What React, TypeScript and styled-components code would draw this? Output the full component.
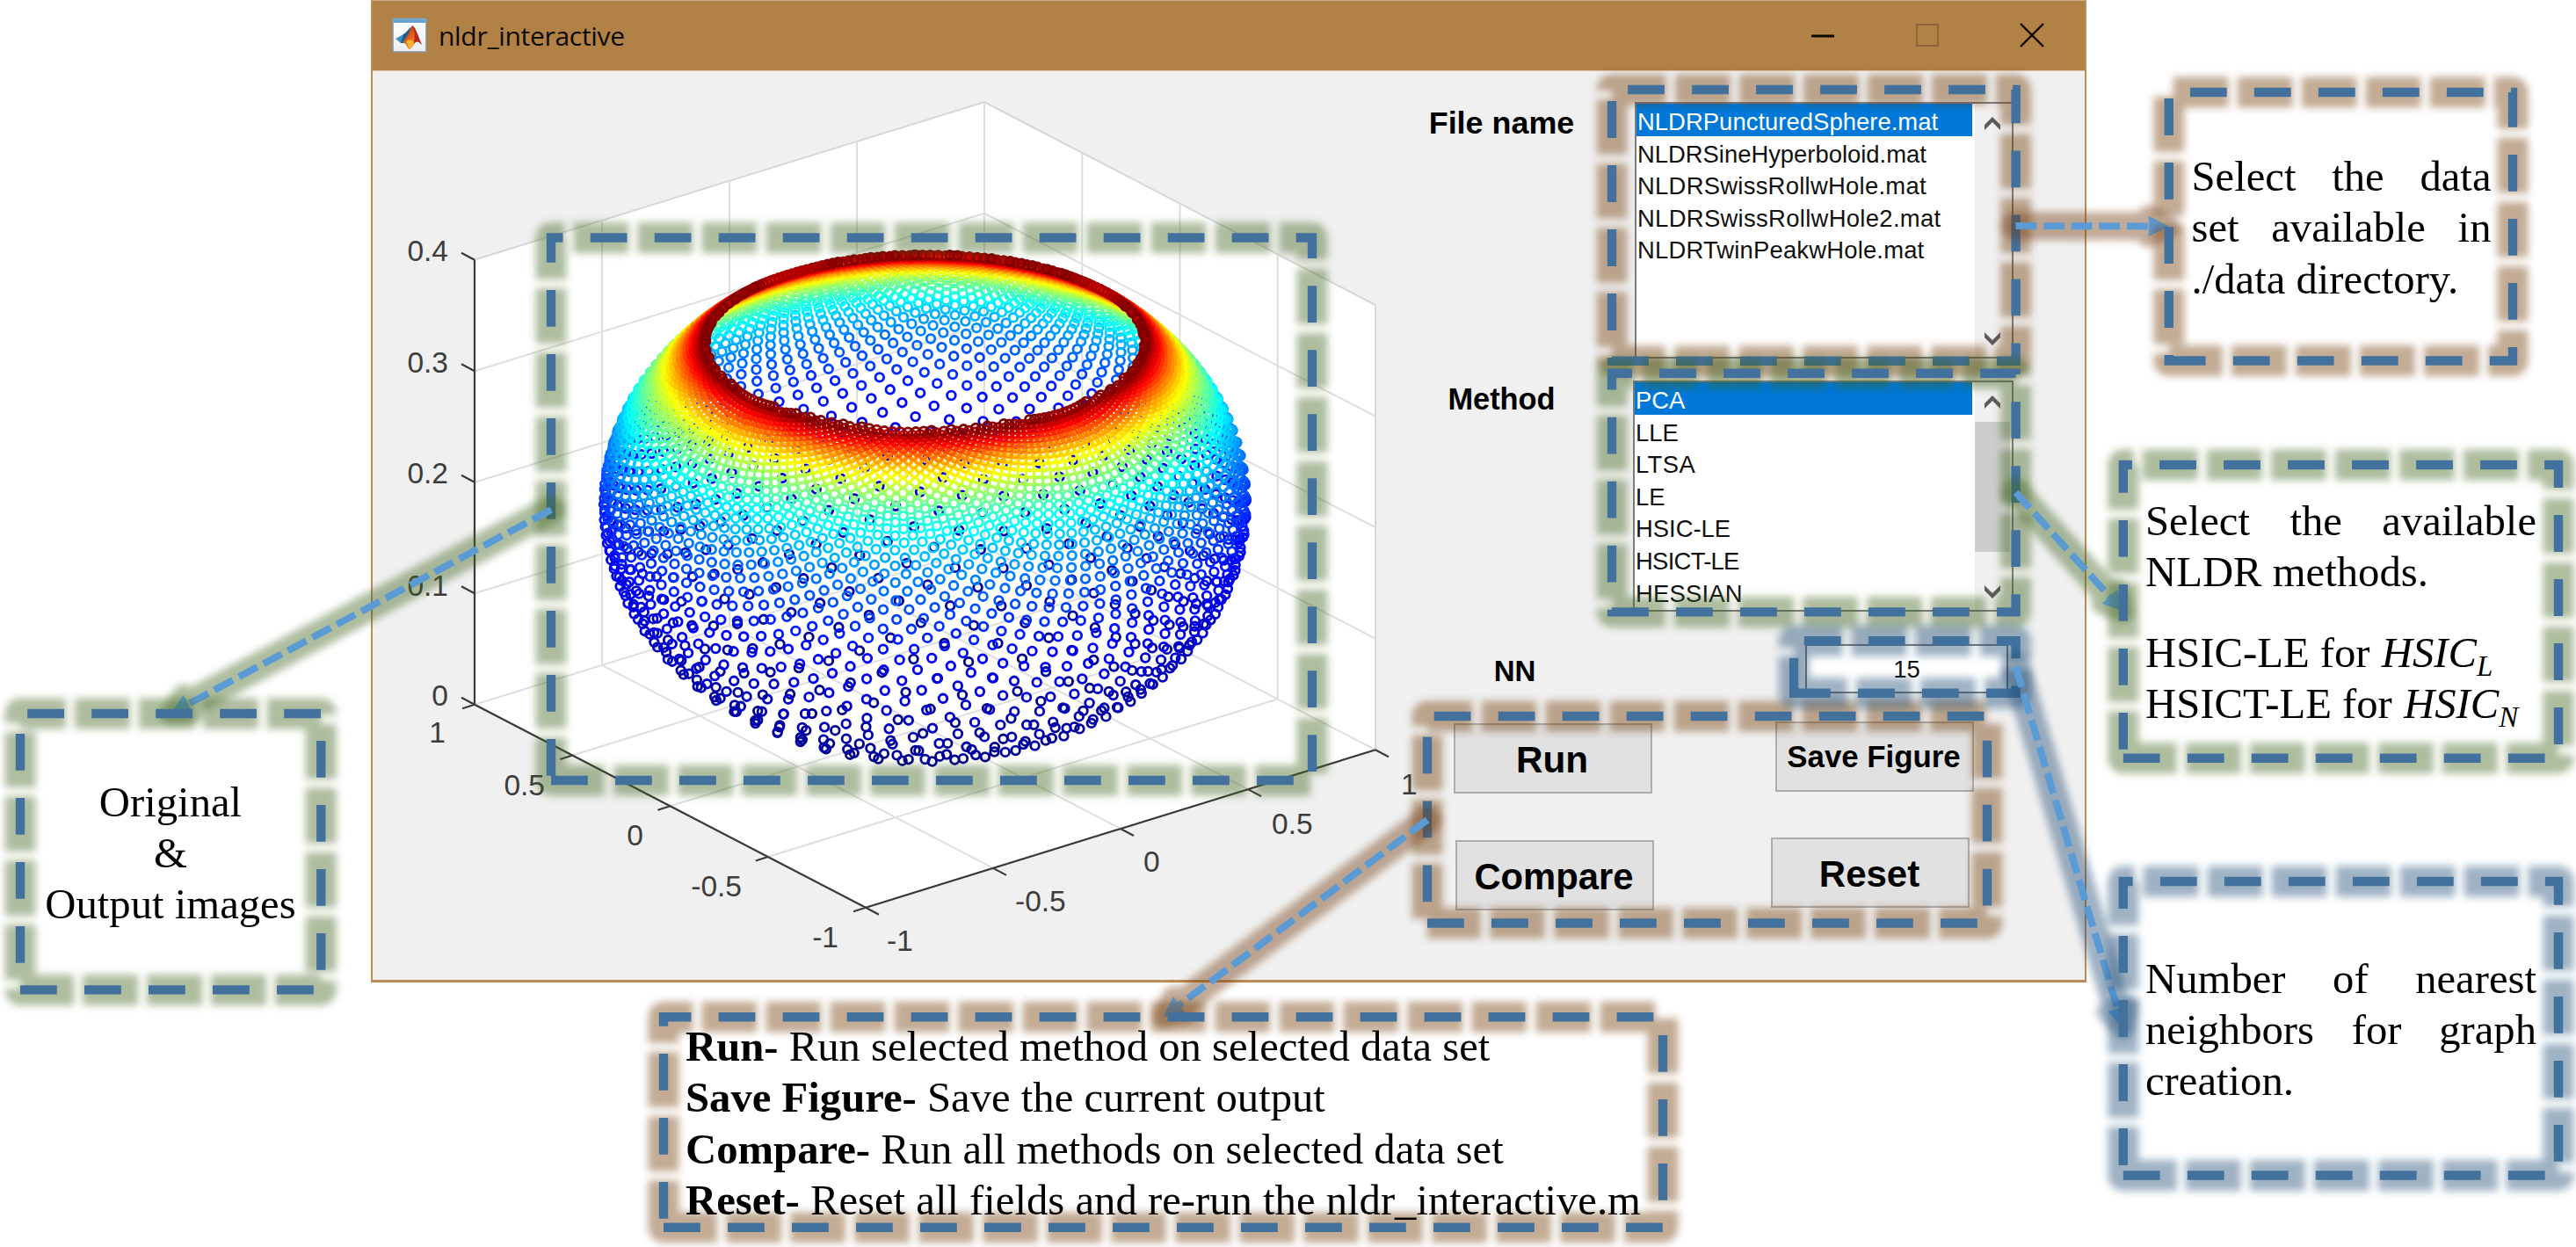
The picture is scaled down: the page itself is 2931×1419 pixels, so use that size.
import React from "react";
import styled, { createGlobalStyle } from "styled-components";

const GlobalStyle = createGlobalStyle`
  html, body { margin: 0; padding: 0; background: #ffffff; }
  *, *::before, *::after { box-sizing: border-box; }
`;

const SANS = `"Liberation Sans", Arial, sans-serif`;
const SERIF = `"Liberation Serif", "Times New Roman", serif`;

const Page = styled.main`
  position: relative;
  width: 2931px;
  height: 1419px;
  overflow: hidden;
  background: #ffffff;
`;

/* ---------- application window ---------- */

const Window = styled.section`
  display: flex;
  flex-direction: column;
  width: 1952px;
  height: 1118px;
  margin-left: 422px;
  border: 2px solid #bd8d55;
  border-top: 1px solid #cfae8c;
  border-bottom-width: 3px;
  background: #f0f0f0;
`;

const TitleBar = styled.header`
  display: flex;
  align-items: center;
  flex: none;
  height: 80px;
  padding: 0 46px 2px 22px;
  background: #b28145;
  border-bottom: 1px solid #dcc2a2;
`;

const Title = styled.h1`
  flex: 1;
  margin: 0 0 0 13px;
  padding-top: 2px;
  font: 400 30px/40px "Open Sans", "Noto Sans", sans-serif;
  letter-spacing: -0.3px;
  color: #0d0905;
`;

const WindowButtons = styled.div`
  display: flex;
  gap: 91px;
`;

const WindowBody = styled.div`
  display: flex;
  flex: 1;
  min-height: 0;
`;

const PlotArea = styled.div`
  flex: none;
  width: 1196px;
  height: 1034px;
  svg { display: block; }
`;

const Controls = styled.div`
  display: flex;
  flex-direction: column;
  flex: 1;
  min-width: 0;
  padding-top: 35px;
`;

const Field = styled.div<{ $gap: number; $height: number }>`
  display: flex;
  margin-top: ${(p) => p.$gap}px;
  height: ${(p) => p.$height}px;
`;

const FieldLabel = styled.label<{ $size: number; $drop: number; $indent?: number }>`
  flex: none;
  width: 177px;
  padding-left: ${(p) => p.$indent ?? 0}px;
  padding-top: ${(p) => p.$drop}px;
  text-align: center;
  white-space: nowrap;
  font: 700 ${(p) => p.$size}px/40px ${SANS};
  color: #000;
`;

const ListBox = styled.div<{ $indent: number; $width: number }>`
  display: flex;
  width: ${(p) => p.$width}px;
  margin-left: ${(p) => p.$indent}px;
  border: 2px solid #7a7d85;
  background: #fff;
  overflow: hidden;
`;

const Options = styled.ul`
  flex: 1;
  min-width: 0;
  margin: 0;
  padding: 0;
  list-style: none;
  overflow: hidden;
`;

const Option = styled.li<{ $selected: boolean; $track?: number }>`
  height: 36.6px;
  margin-right: 3px;
  padding-left: 1px;
  font: 400 27.4px/41px ${SANS};
  letter-spacing: ${(p) => p.$track ?? 0}px;
  white-space: nowrap;
  color: ${(p) => (p.$selected ? "#fff" : "#111")};
  background: ${(p) => (p.$selected ? "#0078d7" : "transparent")};
`;

const ScrollBar = styled.div`
  display: flex;
  flex-direction: column;
  justify-content: space-between;
  align-items: center;
  width: 42px;
  padding: 13px 2px 11px 0;
  background: #f0f0f0;
`;

const Thumb = styled.div`
  width: 40px;
  height: 148px;
  margin: 12px 0 auto;
  background: #cdcdcd;
`;

const NumberBox = styled.div`
  width: 231px;
  margin-left: 257px;
  border: 2px solid #7a7a7a;
  background: #fff;
  text-align: center;
  font: 400 27.4px/53px ${SANS};
  color: #111;
`;

const Actions = styled.div`
  display: flex;
  justify-content: space-between;
  width: 592px;
  margin: 32px 0 0 34px;
`;

const ActionColumn = styled.div<{ $top: number; $gap: number }>`
  display: flex;
  flex-direction: column;
  gap: ${(p) => p.$gap}px;
  padding-top: ${(p) => p.$top}px;
`;

const ActionButton = styled.button<{ $size: number; $drop: number; $indent?: number }>`
  width: 226px;
  height: 80px;
  margin: 0 0 0 ${(p) => p.$indent ?? 0}px;
  padding: ${(p) => p.$drop}px 2px 0 0;
  border: 2px solid #adadad;
  background: #e1e1e1;
  font: 700 ${(p) => p.$size}px/44px ${SANS};
  white-space: nowrap;
  color: #000;
`;

/* ---------- annotations ---------- */

const Overlay = styled.svg`
  position: absolute;
  inset: 0;
  pointer-events: none;
`;

const Callout = styled.aside<{ $x: number; $y: number; $w: number; $align?: string }>`
  position: absolute;
  left: ${(p) => p.$x}px;
  top: ${(p) => p.$y}px;
  width: ${(p) => p.$w}px;
  font: 400 48.7px/58.4px ${SERIF};
  text-align: ${(p) => p.$align ?? "left"};
  color: #000;
`;

const Para = styled.p<{ $before?: number; $nowrap?: boolean }>`
  margin: ${(p) => p.$before ?? 0}px 0 0;
  white-space: ${(p) => (p.$nowrap ? "nowrap" : "normal")};
`;

const MathText = styled.i`
  margin-left: 1px;
  sub {
    font-size: 33px;
    line-height: 0;
    vertical-align: -10px;
  }
`;

/* ---------- 3-D scatter plot ---------- */

const ORIGIN = [1052.5, 827.5];
const AX = [290, -89.75];
const AY = [-222.5, -115.5];
const AZ = -1265;

const project = (x: number, y: number, z: number): [number, number] => [
  ORIGIN[0] + x * AX[0] + y * AY[0],
  ORIGIN[1] + x * AX[1] + y * AY[1] + z * AZ,
];

const LEVELS = 64;

function jet(t: number): string {
  const ch = (c: number) =>
    Math.round(255 * Math.max(0, Math.min(1, 1.5 - Math.abs(4 * t - c))));
  return `rgb(${ch(3)},${ch(2)},${ch(1)})`;
}

/* Plane lattice lifted on a sphere by inverse stereographic projection. */
function puncturedSphere(count: number, stretch: number) {
  const inc = 9 / Math.sqrt(count);
  const pts: { u: number; v: number; r2: number }[] = [];
  for (let u = -5; u <= 5; u += inc) {
    for (let v = -5; v <= 5; v += inc) pts.push({ u, v, r2: u * u + v * v });
  }
  pts.sort((a, b) => a.r2 - b.r2);
  const kept = pts.slice(0, count);
  const max = kept[kept.length - 1].r2;
  const paths: string[] = Array(LEVELS).fill("");
  const r = 4.8;
  for (const p of kept) {
    const a = 4 / (4 + p.r2);
    const [x, y] = project(a * p.u, a * p.v, stretch * 2 * (1 - a));
    const level = Math.min(LEVELS - 1, Math.floor((p.r2 / max) * LEVELS));
    paths[level] += `M${(x - r).toFixed(1)} ${y.toFixed(1)}a${r} ${r} 0 1 0 ${2 * r} 0a${r} ${r} 0 1 0 ${-2 * r} 0`;
  }
  return paths;
}

const RINGS = puncturedSphere(5000, 0.2);

type Seg = [[number, number], [number, number]];

const GRID: Seg[] = [];
for (const t of [-1, -0.5, 0, 0.5, 1]) {
  GRID.push([project(t, 1, 0), project(t, 1, 0.4)]);
  GRID.push([project(1, t, 0), project(1, t, 0.4)]);
  GRID.push([project(t, -1, 0), project(t, 1, 0)]);
  GRID.push([project(-1, t, 0), project(1, t, 0)]);
}
for (const z of [0.1, 0.2, 0.3, 0.4]) {
  GRID.push([project(-1, 1, z), project(1, 1, z)]);
  GRID.push([project(1, 1, z), project(1, -1, z)]);
}

const AXES: Seg[] = [
  [project(-1, 1, 0), project(-1, 1, 0.4)],
  [project(-1, 1, 0), project(-1, -1, 0)],
  [project(-1, -1, 0), project(1, -1, 0)],
];
const tick = (p: [number, number], dx: number, dy: number): Seg => [p, [p[0] + dx, p[1] + dy]];
for (const z of [0, 0.1, 0.2, 0.3, 0.4]) AXES.push(tick(project(-1, 1, z), -15, -8));
for (const t of [-1, -0.5, 0, 0.5, 1]) {
  AXES.push(tick(project(-1, t, 0), -14, 4.5));
  AXES.push(tick(project(t, -1, 0), 15, 8));
}

const LABELS: { x: number; y: number; s: string; end?: boolean }[] = [
  { x: 510, y: 297, s: "0.4", end: true },
  { x: 510, y: 424, s: "0.3", end: true },
  { x: 510, y: 550, s: "0.2", end: true },
  { x: 510, y: 678, s: "0.1", end: true },
  { x: 510, y: 803, s: "0", end: true },
  { x: 507, y: 845, s: "1", end: true },
  { x: 620, y: 905, s: "0.5", end: true },
  { x: 732, y: 962, s: "0", end: true },
  { x: 844, y: 1020, s: "-0.5", end: true },
  { x: 954, y: 1078, s: "-1", end: true },
  { x: 1009, y: 1082, s: "-1" },
  { x: 1155, y: 1037, s: "-0.5" },
  { x: 1301, y: 992, s: "0" },
  { x: 1447, y: 949, s: "0.5" },
  { x: 1594, y: 904, s: "1" },
];

const segs = (list: Seg[]) =>
  list.map(([a, b]) => `M${a[0]} ${a[1]}L${b[0]} ${b[1]}`).join("");

const WALLS = [
  project(-1, 1, 0.4),
  project(1, 1, 0.4),
  project(1, -1, 0.4),
  project(1, -1, 0),
  project(-1, -1, 0),
  project(-1, 1, 0),
]
  .map((p) => p.join(","))
  .join(" ");

function ScatterPlot() {
  return (
    <PlotArea>
      <svg width="1196" height="1034" viewBox="424 81 1196 1034">
        <polygon points={WALLS} fill="#fff" />
        <path d={segs(GRID)} stroke="#000" strokeOpacity="0.13" strokeWidth="2" fill="none" />
        <path d={segs(AXES)} stroke="#3a3a3a" strokeWidth="2.2" fill="none" />
        <g fill="none" strokeWidth="2.8">
          {RINGS.map((d, i) => (
            <path key={i} d={d} stroke={jet((i + 1) / LEVELS)} />
          ))}
        </g>
        <g fontFamily="Liberation Sans, Arial, sans-serif" fontSize="33.5" fill="#3c3c3c">
          {LABELS.map((l, i) => (
            <text key={i} x={l.x} y={l.y} textAnchor={l.end ? "end" : "start"}>
              {l.s}
            </text>
          ))}
        </g>
      </svg>
    </PlotArea>
  );
}

/* ---------- small drawings ---------- */

function AppIcon() {
  return (
    <svg width="40" height="40" viewBox="0 0 40 40">
      <defs>
        <linearGradient id="sheet" x1="0" y1="0" x2="0" y2="1">
          <stop offset="0" stopColor="#ffffff" />
          <stop offset="1" stopColor="#e9ecf1" />
        </linearGradient>
        <linearGradient id="peak" x1="0" y1="0" x2="1" y2="1">
          <stop offset="0" stopColor="#7d2a1c" />
          <stop offset="0.5" stopColor="#ea6a1c" />
          <stop offset="1" stopColor="#f7b02c" />
        </linearGradient>
      </defs>
      <rect x="1" y="1" width="38" height="38" fill="url(#sheet)" stroke="#8a9099" strokeWidth="1.5" />
      <rect x="1.5" y="1.5" width="37" height="4.5" fill="#6ba3cf" />
      <path d="M4 24 L13 19 L17 25 L10 29 Z" fill="#3f8fc9" />
      <path d="M13 19 C17 17 19 12 23 10 L19 27 L14 29 L10 29 Z" fill="#1f5c8f" />
      <path d="M23 9 C19 16 17 24 12 28 C16 28 18 36 20 36 C24 34 25 29 28 27 C30 25 32 29 34 31 C30 22 27 11 23 9 Z" fill="url(#peak)" />
      <path d="M23 9 C26 14 26 21 25 30 C27 27 29 26 34 31 C30 22 27 11 23 9 Z" fill="#b5281e" />
      <path d="M16 28 C18 30 19 35 20 36 C23 34 24 31 25 28 C21 24 18 25 16 28 Z" fill="#f6b32f" />
    </svg>
  );
}

const Glyph = ({ d, stroke, width }: { d: string; stroke: string; width: number }) => (
  <svg width="28" height="28" viewBox="0 0 28 28" fill="none">
    <path d={d} stroke={stroke} strokeWidth={width} />
  </svg>
);

const Chevron = ({ down }: { down?: boolean }) => (
  <svg width="20" height="20" viewBox="0 0 20 20">
    <path
      d={down ? "M1 3 V9 L10 18 L19 9 V3 L10 12 Z" : "M1 17 V11 L10 2 L19 11 V17 L10 8 Z"}
      fill="#5c5c5c"
    />
  </svg>
);

/* ---------- frames and arrows ---------- */

const TINT = { green: "#3c621d", brown: "#70370c", blue: "#1d4772" };
type Tint = keyof typeof TINT;

interface FrameProps {
  l: number;
  t: number;
  r: number;
  b: number;
  tint: Tint;
}

function Frame({ l, t, r, b, tint }: FrameProps) {
  const d = `M${l} ${b}H${r}V${t}H${l}Z`;
  return (
    <g fill="none">
      <path
        d={d}
        stroke={TINT[tint]}
        strokeOpacity="0.42"
        strokeWidth="35"
        strokeLinejoin="round"
        strokeDasharray="63 10"
        strokeDashoffset="2"
        filter="url(#soft)"
      />
      <path d={d} stroke="#41719c" strokeWidth="10.4" strokeDasharray="41.8 31.2" />
    </g>
  );
}

function Arrow({ from, to, tint }: { from: [number, number]; to: [number, number]; tint: Tint }) {
  const dx = to[0] - from[0];
  const dy = to[1] - from[1];
  const len = Math.hypot(dx, dy);
  const ux = dx / len;
  const uy = dy / len;
  const bx = to[0] - ux * 23;
  const by = to[1] - uy * 23;
  const head = `M${to[0]} ${to[1]}L${bx - uy * 11.8} ${by + ux * 11.8}L${bx + uy * 11.8} ${by - ux * 11.8}Z`;
  const line = `M${from[0]} ${from[1]}L${bx} ${by}`;
  return (
    <g>
      <g filter="url(#soft)" opacity="0.42" stroke={TINT[tint]} fill={TINT[tint]} strokeLinejoin="round">
        <path d={line} strokeWidth="32" strokeLinecap="round" />
        <path d={head} strokeWidth="24" />
      </g>
      <path d={line} stroke="#5b9bd5" strokeWidth="7.9" strokeDasharray="23.7 7.9" fill="none" />
      <path d={head} fill="#5b9bd5" />
    </g>
  );
}

const FILES: [string, number][] = [
  ["NLDRPuncturedSphere.mat", 0.05],
  ["NLDRSineHyperboloid.mat", 0],
  ["NLDRSwissRollwHole.mat", 0.28],
  ["NLDRSwissRollwHole2.mat", 0.33],
  ["NLDRTwinPeakwHole.mat", 0.2],
];
const METHODS: [string, number][] = [
  ["PCA", 0],
  ["LLE", 0],
  ["LTSA", 0.4],
  ["LE", 0],
  ["HSIC-LE", 0],
  ["HSICT-LE", -0.7],
  ["HESSIAN", 0.2],
];

export default function App() {
  return (
    <Page>
      <GlobalStyle />
      <Window>
        <TitleBar>
          <AppIcon />
          <Title>nldr_interactive</Title>
          <WindowButtons>
            <Glyph d="M1 15H27" stroke="#0d0905" width={3} />
            <Glyph d="M2 2H26V26H2Z" stroke="#8e6537" width={2} />
            <Glyph d="M1 1L27 27M27 1L1 27" stroke="#0d0905" width={2.4} />
          </WindowButtons>
        </TitleBar>
        <WindowBody>
          <ScatterPlot />
          <Controls>
            <Field $gap={0} $height={292}>
              <FieldLabel $size={35.9} $drop={4}>File name</FieldLabel>
              <ListBox $indent={63} $width={431}>
                <Options>
                  {FILES.map(([name, track], i) => (
                    <Option key={name} $selected={i === 0} $track={track}>{name}</Option>
                  ))}
                </Options>
                <ScrollBar>
                  <Chevron />
                  <Chevron down />
                </ScrollBar>
              </ListBox>
            </Field>
            <Field $gap={25} $height={263}>
              <FieldLabel $size={34.4} $drop={1}>Method</FieldLabel>
              <ListBox $indent={61} $width={433}>
                <Options>
                  {METHODS.map(([name, track], i) => (
                    <Option key={name} $selected={i === 0} $track={track}>{name}</Option>
                  ))}
                </Options>
                <ScrollBar>
                  <Chevron />
                  <Thumb />
                  <Chevron down />
                </ScrollBar>
              </ListBox>
            </Field>
            <Field $gap={37} $height={56}>
              <FieldLabel $size={33} $drop={11} $indent={30}>NN</FieldLabel>
              <NumberBox>15</NumberBox>
            </Field>
            <Actions>
              <ActionColumn $top={2} $gap={53}>
                <ActionButton $size={42.3} $drop={3}>Run</ActionButton>
                <ActionButton $size={41.8} $drop={3} $indent={2}>Compare</ActionButton>
              </ActionColumn>
              <ActionColumn $top={0} $gap={52}>
                <ActionButton $size={34.8} $drop={0} $indent={5}>Save Figure</ActionButton>
                <ActionButton $size={42} $drop={4}>Reset</ActionButton>
              </ActionColumn>
            </Actions>
          </Controls>
        </WindowBody>
      </Window>

      <Overlay width="2931" height="1419" viewBox="0 0 2931 1419">
        <defs>
          <filter id="soft" filterUnits="userSpaceOnUse" x="-60" y="-60" width="3051" height="1539">
            <feGaussianBlur stdDeviation="4.4" />
          </filter>
        </defs>
        <Frame l={627} t={270.5} r={1493} b={888} tint="green" />
        <Frame l={1834} t={102} r={2293.6} b={410.7} tint="brown" />
        <Frame l={1834} t={424.7} r={2293.6} b={696.4} tint="green" />
        <Frame l={1624} t={815} r={2261} b={1050.5} tint="brown" />
        <Frame l={2041} t={729.3} r={2293.6} b={788.7} tint="blue" />

        <Arrow from={[627, 580]} to={[194, 812]} tint="green" />
        <Arrow from={[2293.6, 257]} to={[2467.8, 257.5]} tint="brown" />
        <Arrow from={[2293.6, 560.5]} to={[2415.8, 696]} tint="green" />
        <Arrow from={[2293.6, 759]} to={[2415.8, 1170]} tint="blue" />
        <Arrow from={[1624, 933]} to={[1323.5, 1157.3]} tint="brown" />

        <Frame l={2467.8} t={105} r={2859} b={410.5} tint="brown" />
        <Frame l={2415.8} t={529} r={2911} b={862.7} tint="green" />
        <Frame l={2415.8} t={1003} r={2911} b={1337.5} tint="blue" />
        <Frame l={23} t={812} r={365.3} b={1126.4} tint="green" />
        <Frame l={755} t={1157.3} r={1892} b={1396.7} tint="brown" />
      </Overlay>

      <Callout $x={2493.5} $y={172} $w={341} $align="justify">
        <Para>Select the data set available in ./data directory.</Para>
      </Callout>
      <Callout $x={2441} $y={564} $w={445} $align="justify">
        <Para>Select the available NLDR methods.</Para>
        <Para $before={33} $nowrap>
          HSIC-LE for <MathText>HSIC<sub>L</sub></MathText>
        </Para>
        <Para $nowrap>
          HSICT-LE for <MathText>HSIC<sub>N</sub></MathText>
        </Para>
      </Callout>
      <Callout $x={2441} $y={1084.5} $w={445} $align="justify">
        <Para>Number of nearest neighbors for graph creation.</Para>
      </Callout>
      <Callout $x={23} $y={883.5} $w={342} $align="center">
        <Para>Original</Para>
        <Para>&amp;</Para>
        <Para>Output images</Para>
      </Callout>
      <Callout $x={780} $y={1162} $w={1100}>
        <Para $nowrap><b>Run-</b> Run selected method on selected data set</Para>
        <Para $nowrap><b>Save Figure-</b> Save the current output</Para>
        <Para $nowrap><b>Compare-</b> Run all methods on selected data set</Para>
        <Para $nowrap><b>Reset-</b> Reset all fields and re-run the nldr_interactive.m</Para>
      </Callout>
    </Page>
  );
}
